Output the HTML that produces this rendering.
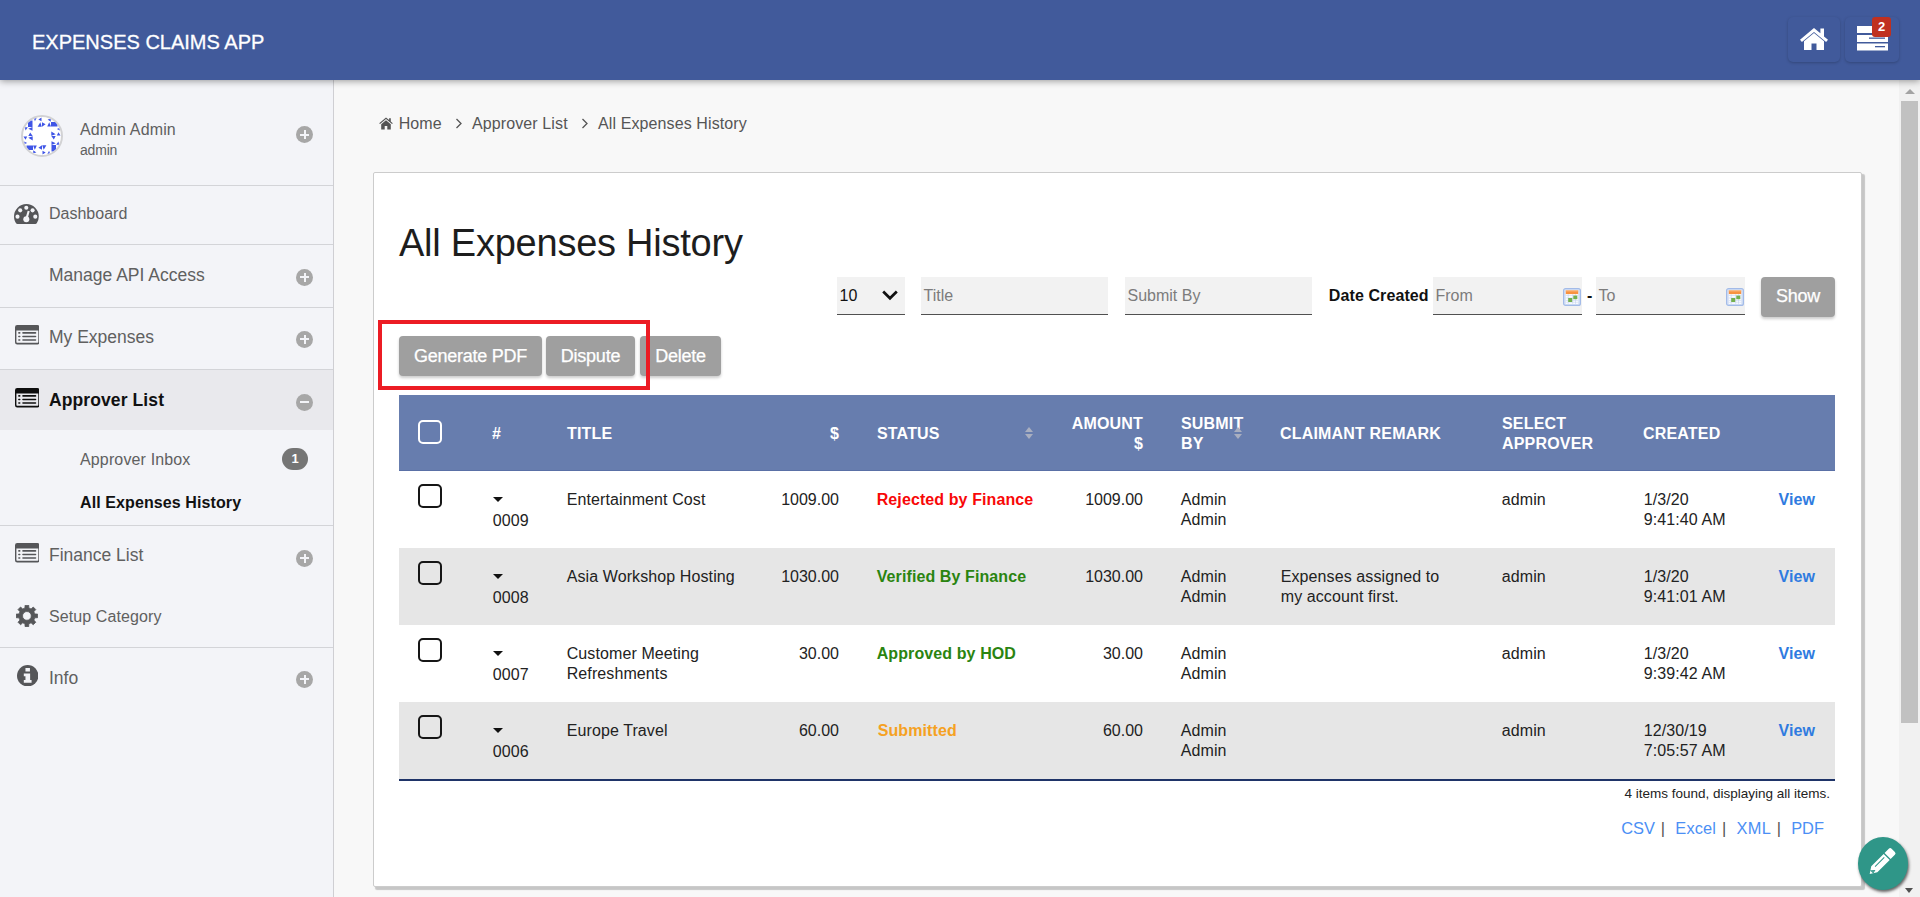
<!DOCTYPE html>
<html lang="en">
<head>
<meta charset="utf-8">
<title>All Expenses History</title>
<style>
*{box-sizing:border-box;margin:0;padding:0}
html,body{width:1920px;height:897px;overflow:hidden}
body{font-family:"Liberation Sans",Arial,sans-serif;background:#f8f8f8;color:#222;position:relative}
a{text-decoration:none}
#hdr{position:absolute;left:0;top:0;width:1920px;height:80px;background:#415a9b;box-shadow:0 1px 7px rgba(0,0,0,.4);z-index:10}
#hdr .brand{position:absolute;left:32px;top:30px;font-size:20px;line-height:24px;color:#fff;-webkit-text-stroke:.3px #fff;white-space:nowrap}
.hbtn{position:absolute;top:17px;width:52px;height:45px;border-radius:5px;background:#415a9b;box-shadow:0 1px 3px rgba(0,0,0,.22)}
.hbtn svg{position:absolute}
.hbadge{position:absolute;left:27px;top:0;width:19px;height:20px;border-radius:3px;background:#c0301f;color:#fff;font-weight:bold;font-size:13px;line-height:20px;text-align:center}

#side{position:absolute;left:0;top:80px;width:334px;height:817px;background:#f3f4f8;border-right:1px solid #cfcfd3}
.sline{position:absolute;left:0;width:333px;height:1px;background:#d3d4d8}
.sitem{position:absolute;left:49px;font-size:17px;line-height:20px;color:#606060;white-space:nowrap}
.plus{position:absolute;left:296.300px;width:17px;height:17px;border-radius:50%;background:#a7a7a7}
.plus:before{content:"";position:absolute;left:4px;top:7.5px;width:9px;height:2px;background:#f3f4f8}
.plus.p:after{content:"";position:absolute;left:7.5px;top:4px;width:2px;height:9px;background:#f3f4f8}
.sico{position:absolute}
.avatar{position:absolute;left:21.300px;top:35.300px;width:42px;height:42px;border-radius:50%;border:2px solid #d2d2d4;background:#fff;overflow:hidden}
.sitem.big{font-size:17.500px}
.sbadge{position:absolute;left:282px;top:368px;width:26px;height:22px;border-radius:11px;background:#757575;color:#fff;font-weight:bold;font-size:13px;line-height:22px;text-align:center}


#scroll{position:absolute;left:1899px;top:80px;width:21px;height:817px;background:#f1f1f1}
#scroll .thumb{position:absolute;left:2px;top:21px;width:17px;height:621.500px;background:#c1c1c1}
#scroll .up{position:absolute;left:5.500px;top:9px;border-left:5px solid transparent;border-right:5px solid transparent;border-bottom:5px solid #a3a3a3}
#scroll .dn{position:absolute;left:6px;top:808px;border-left:4.500px solid transparent;border-right:4.500px solid transparent;border-top:5px solid #505050}

#crumb{position:absolute;left:379px;top:114px;font-size:16px;line-height:20px;color:#555;white-space:nowrap;letter-spacing:.11px}
#card{position:absolute;left:373px;top:172px;width:1489px;height:715px;background:#fff;border:1px solid #ccc;border-radius:2px;box-shadow:2.500px 2.500px 1px rgba(0,0,0,.2)}
h1{position:absolute;left:399px;top:221px;font-size:38px;line-height:44px;font-weight:normal;color:#1d1d1d;white-space:nowrap;letter-spacing:-.24px}

.fld{position:absolute;top:277px;height:38px;background:#f2f2f2;border-bottom:1.100px solid #505050;font-size:16px;line-height:37px;color:#7c7c7c;padding-left:2.500px;white-space:nowrap}
.btn{position:absolute;height:40px;border-radius:4px;background:#9f9f9f;color:#fff;font-size:18px;line-height:40px;text-align:center;box-shadow:0 2px 3px rgba(0,0,0,.2);letter-spacing:-.25px;-webkit-text-stroke:.25px #fff;white-space:nowrap}

#thead{position:absolute;left:399px;top:395px;width:1436px;height:76px;border-bottom:1px solid #5a70a6;background:#677dae}
.th{position:absolute;color:#fff;font-weight:bold;font-size:16px;line-height:20px;white-space:nowrap;letter-spacing:.18px}
.row{position:absolute;left:399px;width:1436px;height:77px}
.row.alt{background:#e6e6e6}
.c{position:absolute;font-size:16px;line-height:20px;color:#222;white-space:nowrap;letter-spacing:.1px}
.c{margin-left:-.3px}
.c[style*="right:"]{letter-spacing:0;margin-left:0}
.c.view{margin-left:-.6px}
.cb{position:absolute;left:18.800px;top:13px;width:24px;height:24px;border:2px solid #161616;border-radius:5px;background:transparent}
.tri{position:absolute;left:93.500px;top:26px;width:0;height:0;border-left:5px solid transparent;border-right:5px solid transparent;border-top:5px solid #111}
.view{color:#2f7be0;font-weight:bold}

#crumb span{position:absolute}
.lbl{position:absolute;left:1328.800px;top:286px;font-size:16px;line-height:20px;font-weight:bold;color:#111;white-space:nowrap;letter-spacing:.1px}
.dash{position:absolute;left:1587px;top:286px;font-size:16px;line-height:20px;font-weight:bold;color:#111}
.cal{position:absolute;right:.8px;top:11px}
#redbox{position:absolute;left:378px;top:320.300px;width:271.800px;height:69.300px;border:4.700px solid #ec1c24}
.sort{position:absolute;width:0;height:0}
.sort:before{content:"";position:absolute;left:0;top:0;border-left:4.500px solid transparent;border-right:4.500px solid transparent;border-bottom:5.500px solid #a9afc0}
.sort:after{content:"";position:absolute;left:0;top:7px;border-left:4.500px solid transparent;border-right:4.500px solid transparent;border-top:5.500px solid #a9afc0}
.st{font-weight:bold}
#tfoot{position:absolute;left:399px;top:779px;width:1436px;height:2px;background:#1f3468}
#found{position:absolute;right:90px;top:784.700px;font-size:13.500px;line-height:18px;color:#222;white-space:nowrap}
#export{position:absolute;left:0;top:818px;font-size:16.400px;line-height:20px;color:#555;white-space:nowrap}
#export a,#export span{position:absolute;top:0}
#export a{color:#4b8ff5}
#fab{position:absolute;left:1858px;top:837px;width:50px;height:52.500px;border-radius:50%;background:#2f9688;box-shadow:1px 2px 3px rgba(0,0,0,.6)}
</style>
</head>
<body>

<svg width="0" height="0" style="position:absolute"><defs>
<g id="listalt"><path stroke="none" fill-rule="evenodd" d="M2.200 0h20.300a2.200 2.200 0 0 1 2.200 2.200v15.100a2.200 2.200 0 0 1-2.200 2.200H2.200A2.200 2.200 0 0 1 0 17.300V2.200A2.200 2.200 0 0 1 2.200 0zM1.400 5.400V17a.7.700 0 0 0 .7.700h20.500a.7.700 0 0 0 .7-.7V5.400z"/><path d="M3.900 7.900h.8M8 7.900h12.500M3.900 11.450h.8M8 11.450h12.500M3.900 15.050h.8M8 15.050h12.500" stroke-width="1.600" stroke-linecap="round" fill="none"/></g>
<g id="calico"><rect x=".6" y=".6" width="16.800" height="16.800" rx="2" fill="#d6e2f6" stroke="#a3bbe8" stroke-width="1.200"/><rect x="2.800" y="2.500" width="12.400" height="13.300" fill="#fff"/><rect x="2.800" y="2.500" width="12.400" height="3.600" fill="#f89240"/><rect x="2.800" y="2.500" width="12.400" height="1" fill="#fbb26f"/><path d="M2.800 7.600h12.400M2.800 10h12.400M2.800 12.400h12.400M2.800 14.200h12.400M5.200 6.100v9.700M9.700 6.100v9.700M12.500 6.100v9.700" stroke="#c3d2ee" stroke-width=".6" fill="none"/><rect x="5.200" y="10" width="4" height="4" fill="#74b04e"/><rect x="10.300" y="7.600" width="4" height="3.600" fill="#74b04e"/></g>
</defs></svg>
<div id="hdr">
  <div class="brand">EXPENSES CLAIMS APP</div>
  <div class="hbtn" style="left:1788px">
    <svg style="left:11.200px;top:10px" width="30" height="24" viewBox="0 0 30 24"><path fill="#fff" d="M15 1 1 12.800l1.900 2.200L15 5l12.100 10 1.900-2.200-4-3.400V1.500h-3.600v4.800zM5 14.300V23h7.500v-6.500h5V23H25v-8.700L15 6z"/></svg>
  </div>
  <div class="hbtn" style="left:1845px;width:54px">
    <svg style="left:12px;top:8px" width="32" height="26" viewBox="0 0 32 26"><g fill="#fff"><rect x="0" y="1" width="31" height="7"/><rect x="0" y="10" width="31" height="7"/><rect x="0" y="18.500" width="31" height="7"/></g><g fill="#415a9b"><rect x="12" y="12.500" width="16" height="1.300"/><rect x="18" y="21" width="10" height="1.300"/></g></svg>
    <div class="hbadge">2</div>
  </div>
</div>

<div id="side">
  <div class="sline" style="top:105px"></div>
  <div class="sline" style="top:164px"></div>
  <div class="sline" style="top:227px"></div>
  <div class="sline" style="top:289px"></div>
  <div style="position:absolute;left:0;top:290px;width:333px;height:60px;background:#e9e9ed"></div>
  <div class="sline" style="top:445px"></div>
  <div class="sline" style="top:567px"></div>

  <div class="avatar"><svg width="38" height="38" viewBox="0 0 38 38"><defs><g id="avq"><path d="M5 3.500h4.500V10H5zM9.500 10v3.800L5.300 11.800zM1.800 10.200h3l-2.200 3.200zM15.300 2.600l3.200-2.200V4.200zM11 1.600l2.600-.6-1.700 3.200zM14.600 9.700l2.700-4.400 1.500 4.400zM19 5.300l3.600 1.900L19 9.700z"/></g></defs><g fill="#3f55e6"><use href="#avq"/><use href="#avq" transform="rotate(90 19 19)"/><use href="#avq" transform="rotate(180 19 19)"/><use href="#avq" transform="rotate(270 19 19)"/></g></svg></div>
  <div class="sitem" style="left:80px;top:40px;font-size:16px;letter-spacing:.15px">Admin Admin</div>
  <div class="sitem" style="left:80px;top:60px;font-size:14px;letter-spacing:-.2px">admin</div>
  <div class="plus p" style="top:46px"></div>

  <svg class="sico" style="left:14.400px;top:124px" width="24.800" height="20" viewBox="0 0 24.800 20"><path fill="#555659" d="M12.400 0A12.400 12.400 0 0 0 0 12.400c0 2.400.7 4.700 1.900 6.600.4.600.9 1 1.600 1h17.800c.7 0 1.200-.4 1.600-1a12.400 12.400 0 0 0 1.900-6.600A12.400 12.400 0 0 0 12.400 0z"/><g fill="#f3f4f8"><circle cx="3.500" cy="12.650" r="2.050"/><circle cx="6.200" cy="6.350" r="2.050"/><circle cx="12.300" cy="3.700" r="2.050"/><circle cx="18.600" cy="6.350" r="2.050"/><circle cx="21.300" cy="12.650" r="2.050"/><circle cx="12.300" cy="15.300" r="3"/><path d="M13.700 6.700l2 .6-2.200 7.600-2-.6z"/></g></svg>
  <div class="sitem" style="top:124px;font-size:16px">Dashboard</div>

  <div class="sitem big" style="top:185px">Manage API Access</div>
  <div class="plus p" style="top:188.5px"></div>

  <svg class="sico" style="left:14.500px;top:245.400px" width="24.700" height="19.500" viewBox="0 0 24.700 19.500"><use href="#listalt" fill="#555659" stroke="#555659"/></svg>
  <div class="sitem big" style="top:247px">My Expenses</div>
  <div class="plus p" style="top:250.5px"></div>

  <svg class="sico" style="left:14.500px;top:308.400px" width="24.700" height="19.500" viewBox="0 0 24.700 19.500"><use href="#listalt" fill="#0e0e0e" stroke="#0e0e0e"/></svg>
  <div class="sitem big" style="top:310px;font-weight:bold;color:#111;letter-spacing:.1px">Approver List</div>
  <div class="plus" style="top:313.5px"></div>

  <div class="sitem" style="left:80px;top:370px;font-size:16px;letter-spacing:.14px">Approver Inbox</div>
  <div class="sbadge">1</div>
  <div class="sitem" style="left:80px;top:413px;font-size:16px;font-weight:bold;color:#111;letter-spacing:.1px">All Expenses History</div>

  <svg class="sico" style="left:14.500px;top:463.400px" width="24.700" height="19.500" viewBox="0 0 24.700 19.500"><use href="#listalt" fill="#555659" stroke="#555659"/></svg>
  <div class="sitem big" style="top:465px">Finance List</div>
  <div class="plus p" style="top:469.5px"></div>

  <svg class="sico" style="left:16.100px;top:525px" width="21.800" height="21.800" viewBox="0 0 22 22"><path fill="#555659" fill-rule="evenodd" stroke="#555659" stroke-width=".8" stroke-linejoin="round" d="M9.02 3.04 L9.19 0.15 L12.81 0.15 L12.98 3.04 L15.23 3.97 L17.40 2.05 L19.95 4.60 L18.03 6.77 L18.96 9.02 L21.85 9.19 L21.85 12.81 L18.96 12.98 L18.03 15.23 L19.95 17.40 L17.40 19.95 L15.23 18.03 L12.98 18.96 L12.81 21.85 L9.19 21.85 L9.02 18.96 L6.77 18.03 L4.60 19.95 L2.05 17.40 L3.97 15.23 L3.04 12.98 L0.15 12.81 L0.15 9.19 L3.04 9.02 L3.97 6.77 L2.05 4.60 L4.60 2.05 L6.77 3.97z M6.60 11.00a4.40 4.40 0 1 0 8.80 0a4.40 4.40 0 1 0 -8.80 0z"/></svg>
  <div class="sitem" style="top:527px;font-size:16px;letter-spacing:.1px">Setup Category</div>

  <svg class="sico" style="left:16.500px;top:585px" width="21.400" height="21.400" viewBox="0 0 22 22"><circle cx="11" cy="11" r="11" fill="#555659"/><path fill="#f3f4f8" d="M8.700 3h4.600v3.700H8.700zM7 8.700h6.500v6.800H15v2.800H7v-2.800h1.700v-4H7z"/></svg>
  <div class="sitem big" style="top:588px">Info</div>
  <div class="plus p" style="top:590.5px"></div>
</div>

<div id="scroll"><div class="up"></div><div class="thumb"></div><div class="dn"></div></div>

<div id="crumb">
  <svg style="position:absolute;left:0;top:2.500px" width="14" height="13" viewBox="0 0 14 13"><path fill="#555" d="M7 .4.200 6.200l.8.900L7 2l6 5.100.8-.9-2-1.700V1.300h-1.700v1.800zM2.200 7.300V12.500h3.500V9h2.600v3.500h3.500V7.300L7 3.300z"/></svg>
  <span style="position:absolute;left:19.700px;top:0">Home</span>
  <svg style="position:absolute;left:76px;top:4px" width="8" height="11" viewBox="0 0 8 11"><path fill="none" stroke="#555" stroke-width="1.300" d="M1.500 1 6 5.500 1.500 10"/></svg>
  <span style="position:absolute;left:93px;top:0">Approver List</span>
  <svg style="position:absolute;left:202px;top:4px" width="8" height="11" viewBox="0 0 8 11"><path fill="none" stroke="#555" stroke-width="1.300" d="M1.500 1 6 5.500 1.500 10"/></svg>
  <span style="position:absolute;left:219px;top:0">All Expenses History</span>
</div>
<div id="card"></div>
<h1>All Expenses History</h1>

<div class="fld" style="left:837px;width:68px;color:#111">10
  <svg style="position:absolute;left:45px;top:13px" width="16" height="11" viewBox="0 0 16 11"><path fill="none" stroke="#111" stroke-width="2.700" d="M1.200 1.500 8 8.300 14.800 1.500"/></svg>
</div>
<div class="fld" style="left:921px;width:187px">Title</div>
<div class="fld" style="left:1125px;width:187px">Submit By</div>
<div class="lbl">Date Created</div>
<div class="fld" style="left:1433px;width:149px">From
  <svg class="cal" width="18" height="18" viewBox="0 0 18 18"><use href="#calico"/></svg>
</div>
<div class="dash">-</div>
<div class="fld" style="left:1596px;width:149px">To
  <svg class="cal" width="18" height="18" viewBox="0 0 18 18"><use href="#calico"/></svg>
</div>
<div class="btn" style="left:1761px;top:277px;width:74px;line-height:38px">Show</div>

<div class="btn" style="left:399px;top:336px;width:143px">Generate PDF</div>
<div class="btn" style="left:546px;top:336px;width:89px">Dispute</div>
<div class="btn" style="left:640px;top:336px;width:81px">Delete</div>
<div id="redbox"></div>

<div id="thead">
  <div class="cb" style="top:25px;border-color:#fff"></div>
  <div class="th" style="left:93px;top:29px">#</div>
  <div class="th" style="left:168px;top:29px">TITLE</div>
  <div class="th" style="right:996px;top:29px">$</div>
  <div class="th" style="left:478px;top:29px">STATUS</div>
  <div class="sort" style="left:626px;top:32px"></div>
  <div class="th" style="right:692px;top:19px;text-align:right">AMOUNT<br>$</div>
  <div class="th" style="left:782px;top:19px">SUBMIT<br>BY</div>
  <div class="sort" style="left:835px;top:32px"></div>
  <div class="th" style="left:881px;top:29px">CLAIMANT REMARK</div>
  <div class="th" style="left:1103px;top:19px">SELECT<br>APPROVER</div>
  <div class="th" style="left:1244px;top:29px">CREATED</div>
</div>

<div class="row" style="top:471px">
  <div class="cb"></div><div class="tri"></div>
  <div class="c" style="left:94px;top:40px">0009</div>
  <div class="c" style="left:168px;top:19px">Entertainment Cost</div>
  <div class="c" style="right:996px;top:19px">1009.00</div>
  <div class="c st" style="left:478px;top:19px;color:#f80808">Rejected by Finance</div>
  <div class="c" style="right:692px;top:19px">1009.00</div>
  <div class="c" style="left:782px;top:19px">Admin<br>Admin</div>
  <div class="c" style="left:1103px;top:19px">admin</div>
  <div class="c" style="left:1245px;top:19px">1/3/20<br>9:41:40 AM</div>
  <div class="c view" style="left:1380px;top:19px">View</div>
</div>
<div class="row alt" style="top:548px">
  <div class="cb"></div><div class="tri"></div>
  <div class="c" style="left:94px;top:40px">0008</div>
  <div class="c" style="left:168px;top:19px">Asia Workshop Hosting</div>
  <div class="c" style="right:996px;top:19px">1030.00</div>
  <div class="c st" style="left:478px;top:19px;color:#2a8410">Verified By Finance</div>
  <div class="c" style="right:692px;top:19px">1030.00</div>
  <div class="c" style="left:782px;top:19px">Admin<br>Admin</div>
  <div class="c" style="left:882px;top:19px">Expenses assigned to<br>my account first.</div>
  <div class="c" style="left:1103px;top:19px">admin</div>
  <div class="c" style="left:1245px;top:19px">1/3/20<br>9:41:01 AM</div>
  <div class="c view" style="left:1380px;top:19px">View</div>
</div>
<div class="row" style="top:625px">
  <div class="cb"></div><div class="tri"></div>
  <div class="c" style="left:94px;top:40px">0007</div>
  <div class="c" style="left:168px;top:19px">Customer Meeting<br>Refreshments</div>
  <div class="c" style="right:996px;top:19px">30.00</div>
  <div class="c st" style="left:478px;top:19px;color:#2a8410">Approved by HOD</div>
  <div class="c" style="right:692px;top:19px">30.00</div>
  <div class="c" style="left:782px;top:19px">Admin<br>Admin</div>
  <div class="c" style="left:1103px;top:19px">admin</div>
  <div class="c" style="left:1245px;top:19px">1/3/20<br>9:39:42 AM</div>
  <div class="c view" style="left:1380px;top:19px">View</div>
</div>
<div class="row alt" style="top:702px">
  <div class="cb"></div><div class="tri"></div>
  <div class="c" style="left:94px;top:40px">0006</div>
  <div class="c" style="left:168px;top:19px">Europe Travel</div>
  <div class="c" style="right:996px;top:19px">60.00</div>
  <div class="c st" style="left:479px;top:19px;color:#f5a122">Submitted</div>
  <div class="c" style="right:692px;top:19px">60.00</div>
  <div class="c" style="left:782px;top:19px">Admin<br>Admin</div>
  <div class="c" style="left:1103px;top:19px">admin</div>
  <div class="c" style="left:1245px;top:19px">12/30/19<br>7:05:57 AM</div>
  <div class="c view" style="left:1380px;top:19px">View</div>
</div>
<div id="tfoot"></div>
<div id="found">4 items found, displaying all items.</div>
<div id="export"><a style="left:1621.200px">CSV</a><span style="left:1660.700px">|</span><a style="left:1675.300px;letter-spacing:.15px">Excel</a><span style="left:1721.900px">|</span><a style="left:1736.600px;letter-spacing:.3px">XML</a><span style="left:1776.700px">|</span><a style="left:1791.200px">PDF</a></div>

<div id="fab"><svg width="50" height="50" viewBox="0 0 50 50" style="position:absolute;left:0;top:0"><g transform="translate(11.700 36.900) rotate(-45)"><path fill="#fff" d="M0 0 6.500-4.300H24v8.600H6.500zM25.300-4.300h6a2 2 0 0 1 2 2v4.600a2 2 0 0 1-2 2h-6z"/><path fill="none" stroke="#2f9688" stroke-width="1" d="M9-1.400h13M3.200-1.300 5.800 1 3.300 1.600z"/></g></svg></div>

</body>
</html>
